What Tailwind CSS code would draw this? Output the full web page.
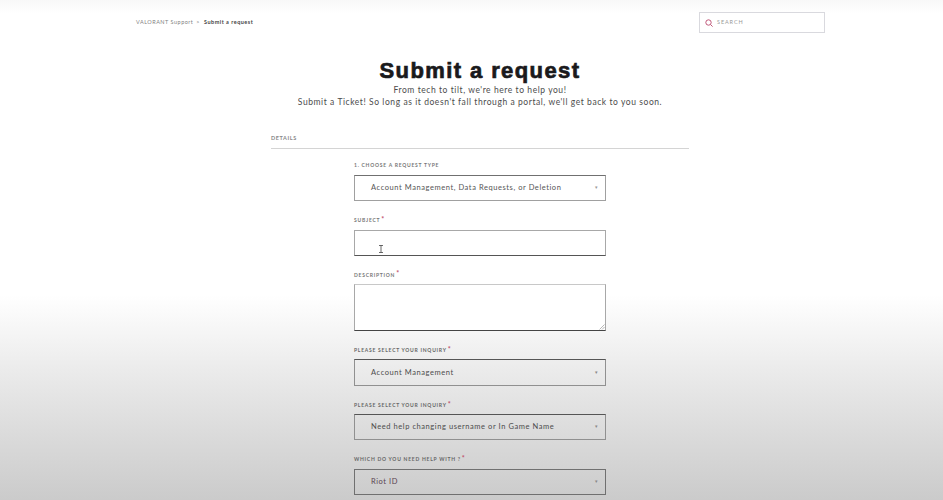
<!DOCTYPE html>
<html>
<head>
<meta charset="utf-8">
<script src="https://cdn.jsdelivr.net/npm/@tailwindcss/browser@4"></script>
</head>
<body class="m-0 h-[500px] w-[943px] overflow-hidden font-['Lato','Open_Sans',sans-serif]">
<div class="h-[500px] w-[943px] overflow-hidden bg-[linear-gradient(to_bottom,#f8f8f8_0px,#ffffff_14px,#ffffff_295px,#ebebeb_370px,#dcdcdc_430px,#cbcbcb_500px)]">
  <header class="flex h-[33px] items-start justify-between pl-[136px] pr-[118px] pt-[12px]">
    <div class="flex items-center gap-[3px] pt-[6px] text-[5.5px] leading-[8px] tracking-[0.5px]">
      <span class="text-[#7f7f7f]">VALORANT Support</span>
      <span class="text-[#7f7f7f]">&gt;</span>
      <span class="ml-[1px] font-bold text-[#444]">Submit a request</span>
    </div>
    <div class="flex h-[21px] w-[126px] items-center gap-[4px] border border-[#d9d9de] bg-white pl-[5px]">
      <svg width="8" height="8" viewBox="0 0 8 8" fill="none" stroke="#c0587a" stroke-width="1"><circle cx="3.5" cy="3.5" r="2.7"/><path d="M5.5 5.5L7.6 7.6"/></svg>
      <span class="text-[5.5px] tracking-[0.9px] text-[#999]">SEARCH</span>
    </div>
  </header>

  <main class="ml-[271px] w-[418px]">
    <h1 class="mt-[26px] text-center font-['Liberation_Sans',sans-serif] text-[22px] font-bold leading-[24px] tracking-[1.4px] text-[#1a1a1c] [-webkit-text-stroke:0.7px_#1a1a1c]">Submit a request</h1>
    <p class="mt-[1px] text-center text-[8.5px] leading-[12px] tracking-[0.57px] text-[#4c4c4c]">From tech to tilt, we're here to help you!<br>Submit a Ticket! So long as it doesn't fall through a portal, we'll get back to you soon.</p>

    <div class="mt-[26px] border-b border-[#d4d4d4] pb-[6px] text-[5.5px] font-bold leading-[8px] tracking-[0.6px] text-[#888]">DETAILS</div>

    <form class="mx-auto mt-[12px] flex w-[252px] flex-col">
      <label class="block h-[8px] text-[5px] font-bold leading-[8px] tracking-[0.75px] text-[#777]">1. CHOOSE A REQUEST TYPE</label>
      <div class="mt-[6px] flex h-[26px] items-center justify-between border border-[#a0a0a0] border-t-[#707070] pl-[16px] pr-[6px] text-[7.5px] tracking-[0.57px] text-[#555]">
        <span>Account Management, Data Requests, or Deletion</span><span class="text-[5px] text-[#999]">▾</span>
      </div>

      <label class="mt-[15px] flex h-[10px] items-start text-[5px] font-bold leading-[9px] tracking-[0.75px] text-[#777]">SUBJECT<span class="ml-[1px] text-[7px] leading-[6px] text-[#c0506a]">*</span></label>
      <div class="relative mt-[4px] h-[26px] border border-[#a8a8a8] border-b-[#555] bg-white">
        <svg class="absolute left-[23px] top-[14px]" width="6" height="8" viewBox="0 0 6 8" fill="none" stroke="#444" stroke-width="0.8"><path d="M1 .5H5M3 .5V7.5M1 7.5H5"/></svg>
      </div>

      <label class="mt-[14px] flex h-[10px] items-start text-[5px] font-bold leading-[11px] tracking-[0.75px] text-[#777]">DESCRIPTION<span class="ml-[1px] text-[7px] leading-[6px] text-[#c0506a]">*</span></label>
      <div class="relative mt-[4px] h-[47px] border border-[#a8a8a8] border-t-[#c8c8c8] border-b-[#444] bg-white">
        <svg class="absolute bottom-0 right-0" width="6" height="6" viewBox="0 0 6 6" stroke="#888" stroke-width="0.6"><path d="M0.5 5.5L5.5 .5M3 5.5L5.5 3"/></svg>
      </div>

      <label class="mt-[15px] flex h-[10px] items-start text-[5px] font-bold leading-[9px] tracking-[0.75px] text-[#666]">PLEASE SELECT YOUR INQUIRY<span class="ml-[1px] text-[7px] leading-[6px] text-[#c0506a]">*</span></label>
      <div class="mt-[3px] flex h-[27px] items-center justify-between border border-[#909090] border-t-[#555] pl-[16px] pr-[6px] text-[7.5px] tracking-[0.57px] text-[#4c4c4c]">
        <span>Account Management</span><span class="text-[5px] text-[#888]">▾</span>
      </div>

      <label class="mt-[15px] flex h-[10px] items-start text-[5px] font-bold leading-[9px] tracking-[0.75px] text-[#666]">PLEASE SELECT YOUR INQUIRY<span class="ml-[1px] text-[7px] leading-[6px] text-[#c0506a]">*</span></label>
      <div class="mt-[3px] flex h-[26px] items-center justify-between border border-[#909090] border-t-[#555] pl-[16px] pr-[6px] text-[7.5px] tracking-[0.57px] text-[#4c4c4c]">
        <span>Need help changing username or In Game Name</span><span class="text-[5px] text-[#888]">▾</span>
      </div>

      <label class="mt-[15px] flex h-[10px] items-start text-[5px] font-bold leading-[9px] tracking-[0.75px] text-[#666]">WHICH DO YOU NEED HELP WITH ?<span class="ml-[1px] text-[7px] leading-[6px] text-[#c0506a]">*</span></label>
      <div class="mt-[4px] flex h-[26px] items-center justify-between border border-[#707070] pl-[16px] pr-[6px] text-[7.5px] tracking-[0.57px] text-[#5a4450]">
        <span>Riot ID</span><span class="text-[5px] text-[#888]">▾</span>
      </div>
    </form>
  </main>
</div>
</body>
</html>
